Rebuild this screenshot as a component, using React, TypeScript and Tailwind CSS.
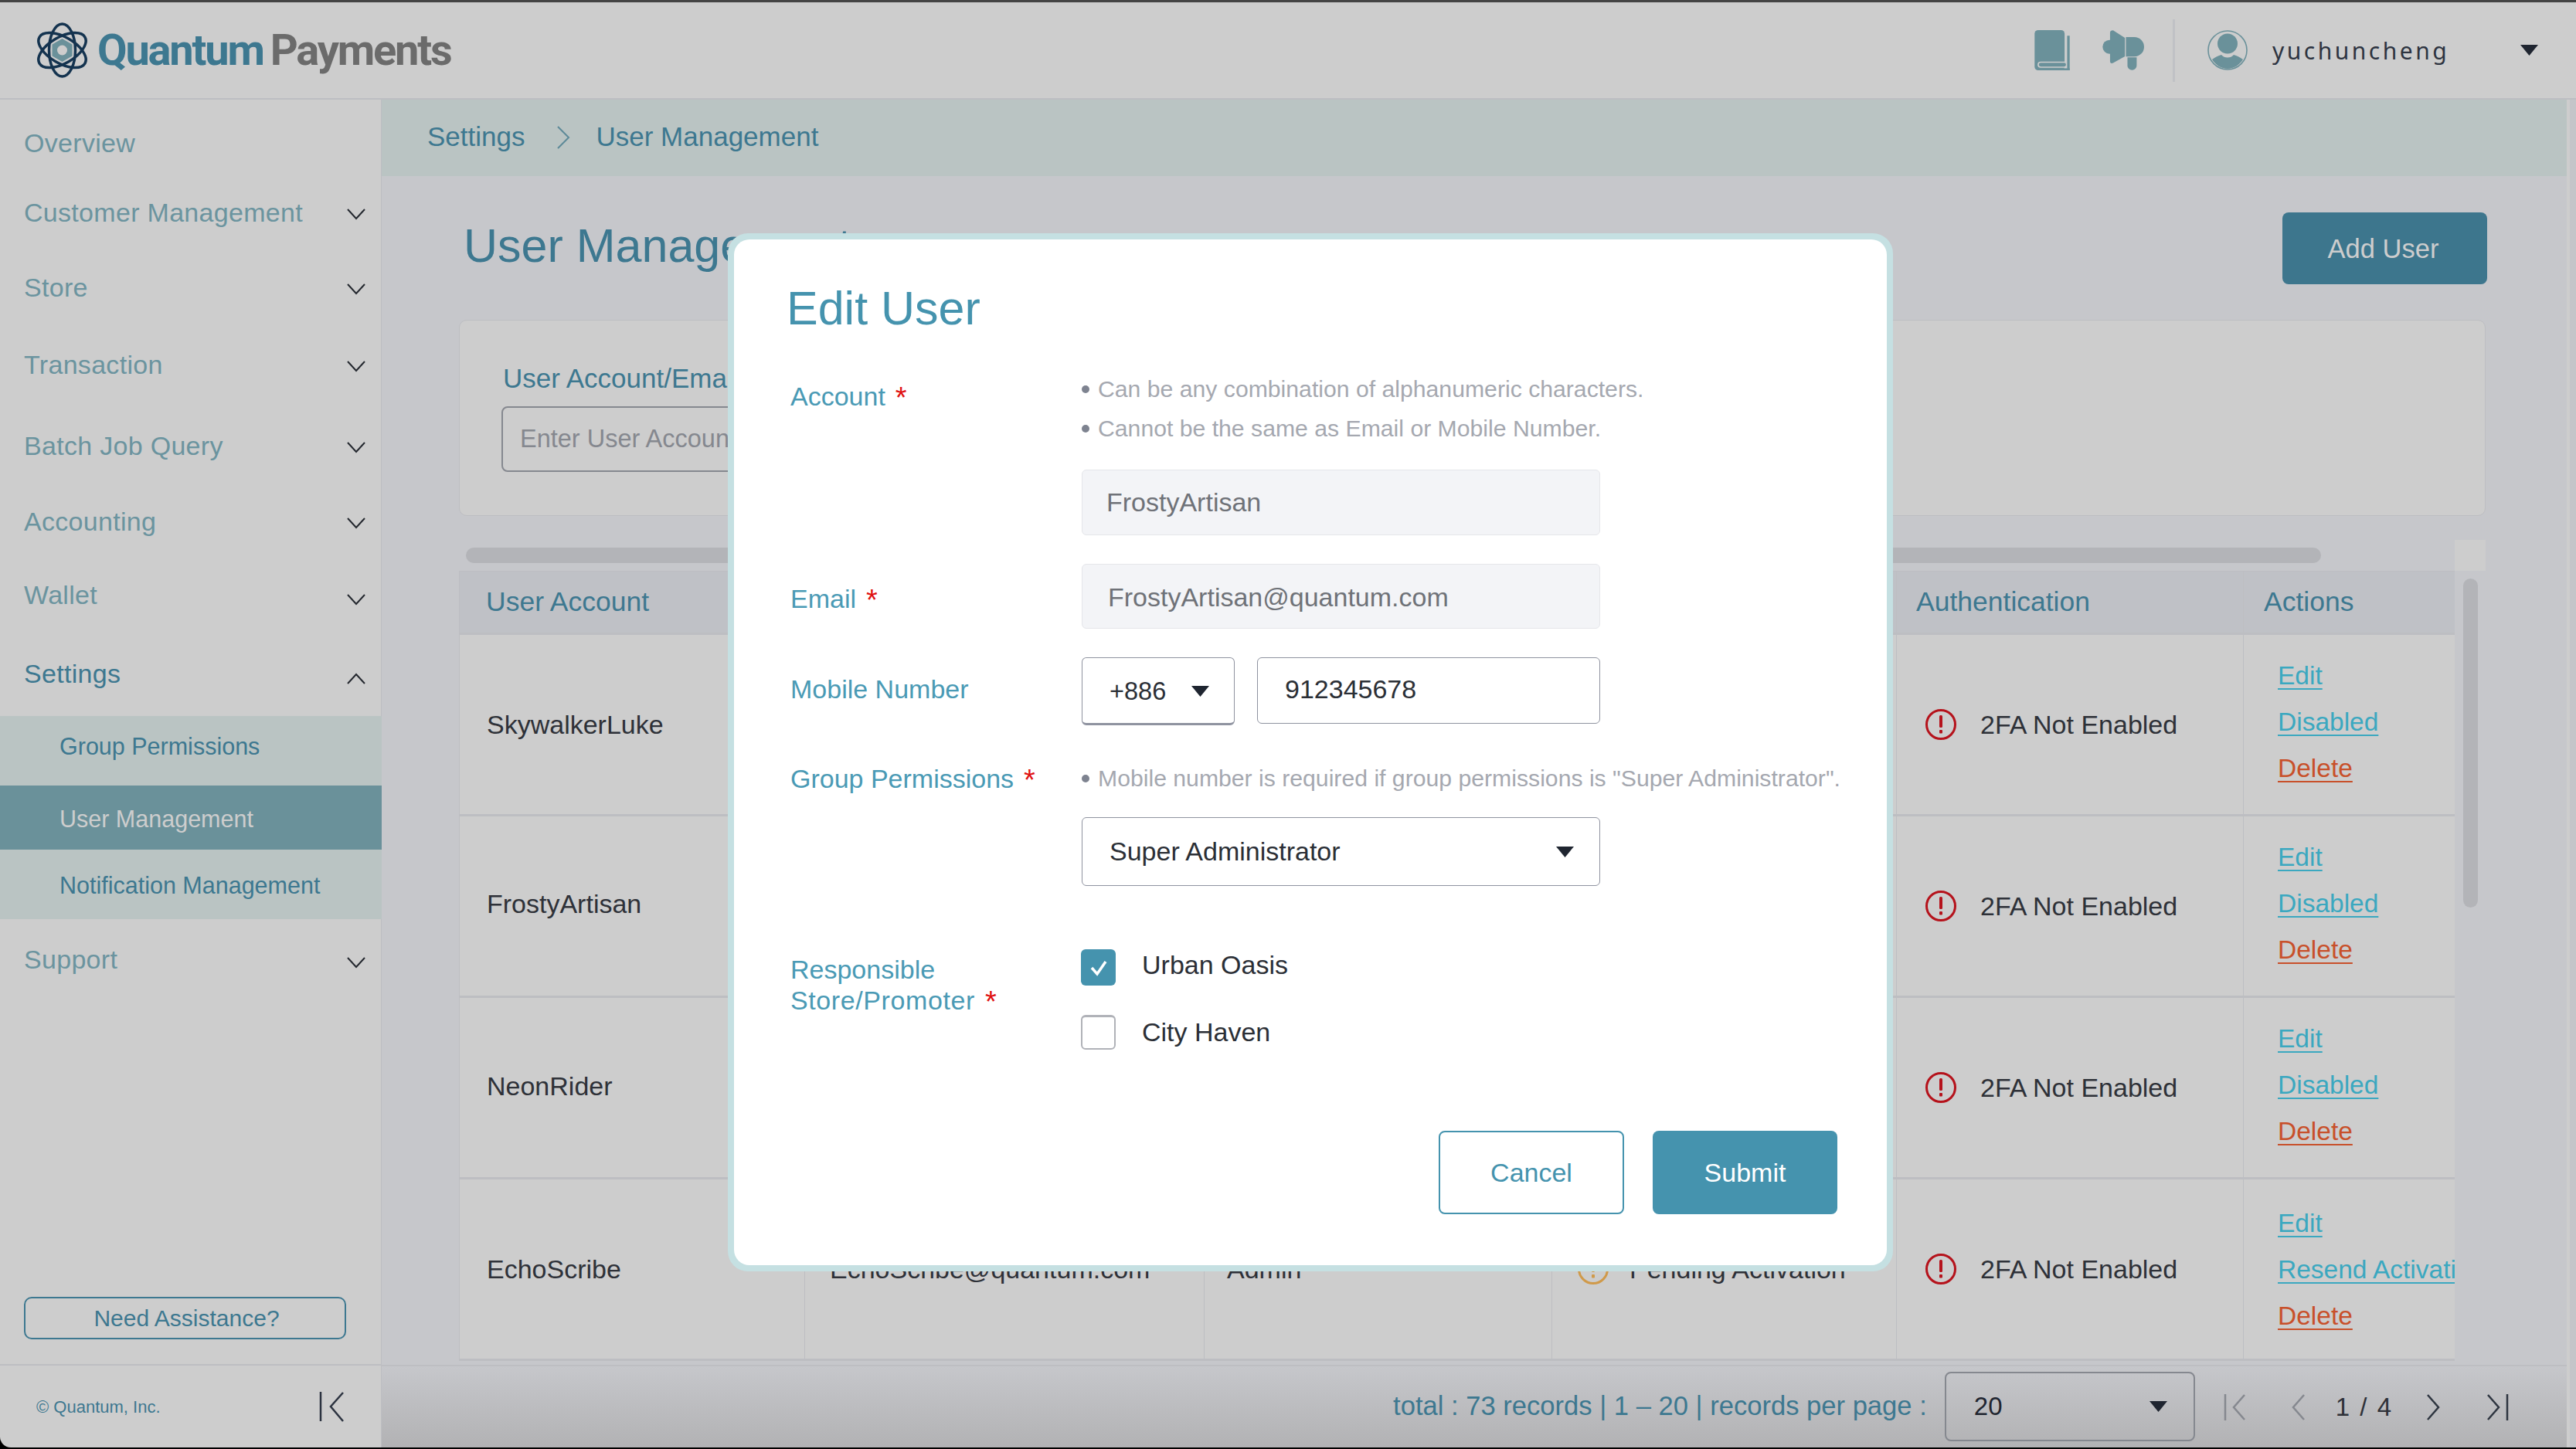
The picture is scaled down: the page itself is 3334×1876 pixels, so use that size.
import React from 'react';

const navItems = [
  { label: 'Overview', box: 'mt-[16px]', chevron: false },
  { label: 'Customer Management', box: 'mt-[10px]', chevron: true },
  { label: 'Store', box: 'mt-[17px]', chevron: true },
  { label: 'Transaction', box: 'mt-[20px]', chevron: true },
  { label: 'Batch Job Query', box: 'mt-[25px]', chevron: true },
  { label: 'Accounting', box: 'mt-[18px]', chevron: true },
  { label: 'Wallet', box: 'mt-[15px]', chevron: true, low: true },
];

const rows = [
  { name: 'SkywalkerLuke', nameBox: '', email: 'SkywalkerLuke@quantum.com', group: 'Admin', status: 'Activated', pending: false, actions: ['Edit', 'Disabled', 'Delete'], actionBox: 'pb-[6px] gap-[22px]' },
  { name: 'FrostyArtisan', nameBox: 'pb-[5px]', email: 'FrostyArtisan@quantum.com', group: 'Super Administrator', status: 'Activated', pending: false, actions: ['Edit', 'Disabled', 'Delete'], actionBox: 'pb-[6px] gap-[22px]' },
  { name: 'NeonRider', nameBox: 'pb-[3px]', email: 'NeonRider@quantum.com', group: 'Admin', status: 'Activated', pending: false, actions: ['Edit', 'Disabled', 'Delete'], actionBox: 'pb-[7px] gap-[22px]' },
  { name: 'EchoScribe', nameBox: '', email: 'EchoScribe@quantum.com', group: 'Admin', status: 'Pending Activation', pending: true, actions: ['Edit', 'Resend Activation', 'Delete'], actionBox: 'pt-[2px] gap-[22px]' },
];

const tableCols = 'grid grid-cols-[447px_517px_450px_446px_449px_274px]';

const Chevron: React.FC<{ up?: boolean }> = ({ up }) => (
  <svg width="24" height="15" viewBox="0 0 24 15" fill="none" stroke="#23272e" strokeWidth="2">
    <polyline points={up ? '1,14 12,2 23,14' : '1,1 12,13 23,1'} />
  </svg>
);

const Caret: React.FC<{ className?: string }> = ({ className }) => (
  <svg className={className} width="23" height="14" viewBox="0 0 23 14" fill="#1f2530">
    <polygon points="0,0 23,0 11.5,14" />
  </svg>
);

const AlertIcon: React.FC<{ color: string }> = ({ color }) => (
  <svg width="42" height="42" viewBox="0 0 42 42" fill="none" className="shrink-0">
    <circle cx="21" cy="21" r="18.5" stroke={color} strokeWidth="3" />
    <rect x="19" y="9" width="4" height="16" rx="1.5" fill={color} />
    <rect x="19" y="28" width="4" height="4.5" rx="1" fill={color} />
  </svg>
);

const PagerIcon: React.FC<{ type: 'first' | 'prev' | 'next' | 'last'; color: string }> = ({ type, color }) => {
  const wide = type === 'first' || type === 'last';
  const w = wide ? 28 : 18;
  const pts =
    type === 'first' ? '27,1 13,17 27,33' : type === 'prev' ? '16,1 2,17 16,33' : type === 'next' ? '2,1 16,17 2,33' : '1,1 15,17 1,33';
  return (
    <svg width={w} height="34" viewBox={`0 0 ${w} 34`} fill="none" stroke={color} strokeWidth="2.5">
      <polyline points={pts} />
      {type === 'first' && <line x1="2" y1="0" x2="2" y2="34" />}
      {type === 'last' && <line x1="26" y1="0" x2="26" y2="34" />}
    </svg>
  );
};

const Required = () => <span className="ml-[13px] align-[-3px] text-[38px] leading-none text-[#e01010]">*</span>;

const Logo = () => (
  <svg width="67" height="72" viewBox="0 0 67 72" fill="none">
    <g stroke="#14334f" strokeWidth="3.5">
      <ellipse cx="33.5" cy="36" rx="17" ry="34" />
      <ellipse cx="33.5" cy="36" rx="17" ry="34" transform="rotate(60 33.5 36)" />
      <ellipse cx="33.5" cy="36" rx="17" ry="34" transform="rotate(-60 33.5 36)" />
    </g>
    <polygon points="33.5,21 46.5,28.5 46.5,43.5 33.5,51 20.5,43.5 20.5,28.5" fill="#6a919a" />
    <circle cx="33.5" cy="36" r="6.5" fill="#cdcdcd" />
  </svg>
);

const BookIcon = () => (
  <svg width="46" height="52" viewBox="0 0 138 158">
    <rect x="0" y="0" width="118" height="158" rx="14" fill="#6a919a" />
    <rect x="14" y="126" width="112" height="20" rx="10" fill="#6a919a" stroke="#cdcdcd" strokeWidth="5" />
    <rect x="128" y="22" width="10" height="136" fill="#6a919a" />
    <rect x="60" y="150" width="78" height="8" fill="#6a919a" />
  </svg>
);

const MegaphoneIcon = () => (
  <svg width="54" height="52" viewBox="0 0 163 156" fill="#6a919a">
    <circle cx="28" cy="65" r="27" />
    <path d="M30 10q0-10 12-10L88 30V102L42 128q-12 4-12-8Z" />
    <path d="M92 27H125a38 38 0 0 1 0 76H92Z" />
    <path d="M98 106H134V138a18 18 0 0 1-36 0Z" />
  </svg>
);

const AvatarIcon = () => (
  <svg width="52" height="52" viewBox="0 0 52 52" fill="none">
    <circle cx="26" cy="26" r="25" stroke="#6a919a" strokeWidth="1.6" />
    <circle cx="26" cy="17.5" r="13" fill="#6a919a" />
    <path d="M6 38c4-3 8-5 12-6 2 2.500 5 3.500 8 3.500s6-1 8-3.500c4 1 8 3 12 6-4.500 7-11.500 12-20 12S10.500 45 6 38Z" fill="#6a919a" />
  </svg>
);

const Field: React.FC<{ className: string; children: React.ReactNode }> = ({ className, children }) => (
  <div className={`flex items-center rounded-[6px] border ${className}`}>{children}</div>
);

const Hint: React.FC<{ text: string }> = ({ text }) => (
  <div className="flex h-[51px] items-center whitespace-nowrap text-[30.200px] text-[#a5a8b0]">
    <span className="mr-[11px] h-[10px] w-[10px] rounded-full bg-[#7e8390]" />
    {text}
  </div>
);

const EditUserModal = () => (
  <div className="absolute left-[942px] top-[302px] h-[1344px] w-[1508px] rounded-[26px] bg-[#c5e0e2] p-[8px]">
    <div className="flex h-full flex-col rounded-[20px] bg-white pl-[73px] pr-[64px] text-[34px] text-[#2b2f36]">
      <h2 className="-ml-[5px] mt-[59px] h-[60px] text-[61px] leading-[60px] text-[#4593ae]">Edit User</h2>

      <div className="mt-[49px] flex">
        <div className="mt-[15px] h-[40px] w-[377px] shrink-0 leading-[40px] text-[#4a9ab5]">
          Account<Required />
        </div>
        <div className="flex flex-col">
          <Hint text="Can be any combination of alphanumeric characters." />
          <Hint text="Cannot be the same as Email or Mobile Number." />
          <Field className="mt-[28px] h-[85px] w-[671px] border-[#e5e6ea] bg-[#f3f4f7] pl-[31px] text-[#6f7278]">FrostyArtisan</Field>
        </div>
      </div>

      <div className="mt-[37px] flex items-center">
        <div className="mt-[6px] w-[377px] shrink-0 leading-[40px] text-[#4a9ab5]">
          Email<Required />
        </div>
        <Field className="h-[84px] w-[671px] border-[#e5e6ea] bg-[#f3f4f7] pl-[33px] pt-[3px] text-[#6f7278]">FrostyArtisan@quantum.com</Field>
      </div>

      <div className="mt-[37px] flex items-center">
        <div className="-mt-[6px] w-[377px] shrink-0 leading-[40px] text-[#4a9ab5]">Mobile Number</div>
        <Field className="h-[88px] w-[198px] justify-between border-[#8f93a0] border-b-[3px] pl-[35px] pr-[32px] pt-[2px] text-[32.500px]">
          +886
          <Caret />
        </Field>
        <Field className="-mt-[2px] ml-[29px] h-[86px] w-[444px] border-[#8f93a0] pb-[3px] pl-[35px]">912345678</Field>
      </div>

      <div className="mt-[43px] flex">
        <div className="mt-[6px] h-[40px] w-[377px] shrink-0 leading-[40px] text-[#4a9ab5]">
          Group Permissions<Required />
        </div>
        <div className="flex flex-col">
          <Hint text={'Mobile number is required if group permissions is "Super Administrator".'} />
          <Field className="mt-[25px] h-[89px] w-[671px] justify-between border-[#8f93a0] pl-[35px] pr-[33px]">
            Super Administrator
            <Caret />
          </Field>
        </div>
      </div>

      <div className="mt-[82px] flex">
        <div className="mt-[6px] w-[376px] shrink-0 leading-[40px] text-[#4a9ab5]">
          Responsible
          <br />
          <span className="tracking-[0.6px]">Store/Promoter</span>
          <Required />
        </div>
        <div className="flex flex-col">
          <div className="flex h-[47px] items-center">
            <span className="flex h-[47px] w-[45px] items-center justify-center rounded-[6px] bg-[#4593ae]">
              <svg width="24" height="24" viewBox="0 0 24 24" fill="none" stroke="white" strokeWidth="3.5">
                <polyline points="3,12 10,20 21,4" />
              </svg>
            </span>
            <span className="ml-[34px] -mt-[7px]">Urban Oasis</span>
          </div>
          <div className="mt-[38px] flex h-[45px] items-center">
            <span className="h-[45px] w-[45px] rounded-[6px] border-2 border-[#b0b2b8] border-t-[3px]" />
            <span className="ml-[34px]">City Haven</span>
          </div>
        </div>
      </div>

      <div className="mt-[105px] flex justify-end gap-[37px]">
        <button className="h-[108px] w-[240px] rounded-[8px] border-2 border-[#4593ae] text-[#4593ae]">Cancel</button>
        <button className="h-[108px] w-[239px] rounded-[8px] bg-[#4593ae] text-white">Submit</button>
      </div>
    </div>
  </div>
);

const Sidebar = () => (
  <aside className="flex w-[494px] shrink-0 flex-col border-r border-[#bdbec2] bg-[#cdcdcd]">
    <nav className="flex flex-col text-[34px] tracking-[0.3px] text-[#6b949f]">
      {navItems.map((item) => (
        <div key={item.label} className={`flex h-[80px] items-center justify-between pl-[31px] pr-[20px] ${item.box}`}>
          {item.label}
          {item.chevron && (
            <span className={item.low ? 'mt-[12px]' : 'mt-[4px]'}>
              <Chevron />
            </span>
          )}
        </div>
      ))}
      <div className="mt-[22px] flex h-[80px] items-center justify-between pl-[31px] pr-[20px] text-[#3d7890]">
        Settings
        <span className="mt-[12px]">
          <Chevron up />
        </span>
      </div>
      <div className="mt-[15px] w-[495px] text-[30.500px] tracking-normal text-[#3d7890]">
        <div className="flex h-[90px] items-center bg-[#bac4c3] pb-[10px] pl-[77px]">Group Permissions</div>
        <div className="flex h-[83px] items-center bg-[#6a919a] pl-[77px] pt-[4px] text-[#cdcdcd]">User Management</div>
        <div className="flex h-[90px] items-center bg-[#bac4c3] pl-[77px] pt-[4px]">Notification Management</div>
      </div>
      <div className="mt-[12px] flex h-[80px] items-center justify-between pl-[31px] pr-[20px]">
        Support
        <span className="mt-[8px]">
          <Chevron />
        </span>
      </div>
    </nav>
    <div className="mt-auto px-[31px] pb-[32px]">
      <button className="h-[55px] w-[417px] rounded-[10px] border-2 border-[#3d7890] pl-[4px] text-[30px] text-[#3d7890]">Need Assistance?</button>
    </div>
    <div className="flex h-[108px] items-center justify-between border-t-2 border-[#bdbec2] pl-[47px] pr-[48px]">
      <span className="text-[22px] text-[#3d7890]">© Quantum, Inc.</span>
      <svg width="32" height="40" viewBox="0 0 32 40" fill="none" stroke="#2c3340" strokeWidth="2.500">
        <line x1="2" y1="1" x2="2" y2="39" />
        <polyline points="31,2 15,20 31,39" />
      </svg>
    </div>
  </aside>
);

const UserTable = () => (
  <div className="w-[2583px] shrink-0 overflow-hidden">
    <div className={`${tableCols} h-[83px] border-y border-b-[3px] border-[#bdbec2] bg-[#bfc1c6] text-[35.500px] text-[#3d7890]`}>
      {['User Account', 'Email', 'Group Permissions', 'Account Status', 'Authentication', 'Actions'].map((h, i) => (
        <div key={h} className={`flex items-center ${i === 5 ? 'pl-[26px]' : i === 0 ? 'pl-[34px]' : 'pl-[25px]'} border-l border-[#bdbec2]`}>
          {h}
        </div>
      ))}
    </div>
    {rows.map((r) => (
      <div key={r.name} className={`${tableCols} h-[235px] border-b-[3px] border-[#bdbec2] bg-[#cdcdcd] text-[34px] text-[#2e3138]`}>
        <div className={`flex items-center border-l border-[#bdbec2] pl-[35px] ${r.nameBox}`}>{r.name}</div>
        <div className="flex items-center border-l border-[#bdbec2] pl-[32px]">{r.email}</div>
        <div className="flex items-center border-l border-[#bdbec2] pl-[29px]">{r.group}</div>
        <div className="flex items-center gap-[26px] border-l border-[#bdbec2] pl-[32px]">
          <AlertIcon color={r.pending ? '#d09a4a' : '#3d7890'} />
          {r.status}
        </div>
        <div className="flex items-center gap-[30px] border-l border-[#bdbec2] pl-[36px]">
          <AlertIcon color="#b5121b" />
          2FA Not Enabled
        </div>
        <div className={`flex flex-col justify-center overflow-hidden whitespace-nowrap border-l border-[#bdbec2] pl-[44px] text-[33.500px] leading-[38px] ${r.actionBox}`}>
          {r.actions.map((a) => (
            <a
              key={a}
              className={`w-fit underline decoration-2 underline-offset-[5px] ${a === 'Delete' ? 'text-[#c8502a]' : 'text-[#3ba8c0]'}`}
            >
              {a}
            </a>
          ))}
        </div>
      </div>
    ))}
  </div>
);

export default function App() {
  return (
    <div className="relative flex h-[1876px] w-[3334px] flex-col overflow-hidden bg-black font-['Liberation_Sans',Arial,sans-serif]">
      <div className="h-[3px] shrink-0 bg-[#444]" />
      <header className="flex h-[126px] shrink-0 items-center border-b-2 border-[#bdbec2] bg-[#cdcdcd] pl-[47px]">
        <Logo />
        <div className="ml-[12px] whitespace-nowrap font-['Roboto',sans-serif] text-[56px] font-bold leading-none tracking-[-2.200px]">
          <span className="text-[#3d7890]">Quantum</span>
          <span className="ml-[9px] text-[#6b6b6b]">Payments</span>
        </div>
        <div className="ml-auto flex items-center">
          <BookIcon />
          <span className="ml-[42px]">
            <MegaphoneIcon />
          </span>
          <span className="ml-[37px] mr-[42px] h-[81px] w-[3px] bg-[#c0c1c5]" />
          <AvatarIcon />
          <span className="ml-[32px] w-[321px] font-['Noto_Sans',sans-serif] text-[30px] tracking-[3.500px] text-[#2d3441]">yuchuncheng</span>
          <Caret className="mr-[49px]" />
        </div>
      </header>

      <div className="mb-[2px] flex min-h-0 flex-1 overflow-hidden rounded-bl-[14px]">
        <Sidebar />
        <main className="flex min-w-0 flex-1 flex-col bg-[#c6c7cb]">
          <div className="flex h-[99px] shrink-0 items-center bg-[#bac4c3] pb-[2px] pl-[59px] text-[35px] text-[#3d7890]">
            Settings
            <svg className="ml-[41px] mr-[33px]" width="18" height="30" viewBox="0 0 18 30" fill="none" stroke="#5d8a98" strokeWidth="2">
              <polyline points="2,1 16,15 2,29" />
            </svg>
            User Management
          </div>
          <div className="flex min-h-0 flex-1 flex-col overflow-hidden pl-[100px] pr-[105px]">
            <div className="mt-[47px] flex h-[93px] shrink-0 items-center justify-between">
              <h1 className="mb-[6px] ml-[6px] text-[61px] text-[#3d7890]">User Management</h1>
              <button className="-mr-[2px] h-[93px] w-[265px] rounded-[8px] bg-[#3d768d] pr-[4px] pt-[2px] text-[34.500px] text-[#cdcdcd]">Add User</button>
            </div>
            <section className="mt-[46px] h-[254px] shrink-0 rounded-[10px] border border-[#bdbec2] bg-[#cdcdcd] pl-[54px] pt-[55px] text-[35px]">
              <div className="ml-[2px] h-[40px] leading-[40px] text-[#3d7890]">User Account/Email</div>
              <div className="mt-[16px] flex h-[85px] w-[760px] items-center rounded-[8px] border-2 border-[#85888f] pl-[22px] text-[32.500px] text-[#85888f]">
                Enter User Account
              </div>
            </section>
            <div className="mt-[31px] flex h-[40px] shrink-0 items-center justify-between">
              <div className="ml-[9px] h-[20px] w-[2401px] rounded-full bg-[#b3b4b8]" />
              <div className="h-[40px] w-[40px] bg-[#cdcdcd]" />
            </div>
            <div className="flex min-h-0 flex-1">
              <UserTable />
              <div className="ml-[11px] mt-[10px] h-[426px] w-[19px] rounded-full bg-[#b3b4b8]" />
            </div>
          </div>
          <footer className="flex h-[107px] shrink-0 items-center justify-end border-t-2 border-[#bdbec2] bg-linear-to-b from-[#c6c7cb] to-[#b2b2b4] pr-[75px]">
            <span className="mb-[2px] text-[34.600px] text-[#3d7890]">total : 73 records | 1 – 20 | records per page :</span>
            <div className="mb-[2px] ml-[23px] flex h-[90px] w-[324px] items-center justify-between rounded-[8px] border-2 border-[#85888f] pl-[36px] pr-[34px] text-[33px] text-[#1f2530]">
              20
              <Caret />
            </div>
            <span className="ml-[37px]">
              <PagerIcon type="first" color="#85888f" />
            </span>
            <span className="ml-[60px]">
              <PagerIcon type="prev" color="#85888f" />
            </span>
            <span className="ml-[39px] text-[33px] tracking-[2px] text-[#2e3138]">1 / 4</span>
            <span className="ml-[43px]">
              <PagerIcon type="next" color="#2e3540" />
            </span>
            <span className="ml-[61px]">
              <PagerIcon type="last" color="#2e3540" />
            </span>
          </footer>
        </main>
        <div className="w-[12px] shrink-0 bg-[#cdcdcd] pl-[4px]">
          <div className="h-full bg-[#c4c5c9]" />
        </div>
      </div>

      <EditUserModal />
    </div>
  );
}
